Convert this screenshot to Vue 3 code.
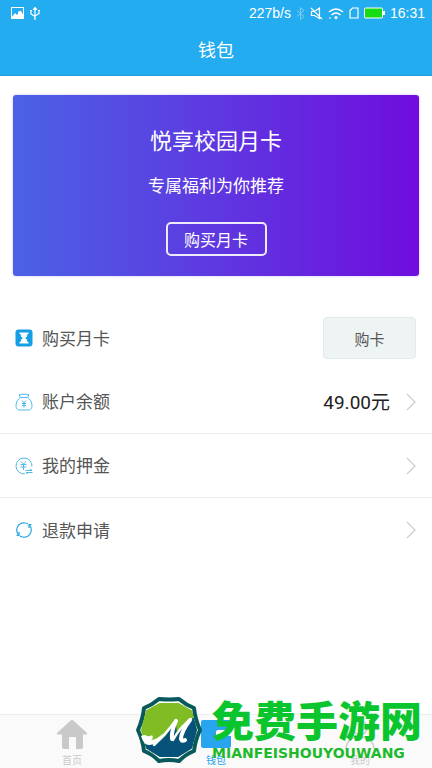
<script setup>
import { ref } from 'vue'

const activeTab = ref('wallet')

const rows = [
  { id: 'balance', label: '账户余额', value: '49.00元' },
  { id: 'deposit', label: '我的押金' },
  { id: 'refund', label: '退款申请' },
]

const tabs = [
  { id: 'home', label: '首页' },
  { id: 'wallet', label: '钱包' },
  { id: 'mine', label: '我的' },
]
</script>

<template>
  <div class="page">
    <header class="top">
      <div class="status">
        <svg width="13" height="12" viewBox="0 0 13 12">
          <path fill="#fff" fill-rule="evenodd" d="M0 0h13v12H0zM1 1v9l3-4 2 2 3-4 3 3V1z" />
          <circle cx="9" cy="6" r="2" fill="#fff" />
          <path fill="#fff" d="M1 11l3-4 2 2 3-3 3 3v2z" />
        </svg>
        <svg width="12" height="13" viewBox="0 0 12 13" fill="none" stroke="#fff" stroke-width="1.200">
          <path d="M6 1v11M2 4v3l4 2.500M10 4v2.500L6 9" />
          <path d="M4.500 2.500L6 .5l1.500 2zM1 3.500h2M9 3.500h2M5 12h2" />
        </svg>
        <span class="speed">227b/s</span>
        <svg class="bluetooth" width="9" height="13" viewBox="0 0 9 13" fill="none" stroke="#fff">
          <path d="M1 3.500l7 6-3.500 3V.7L8 3.500l-7 6" />
        </svg>
        <svg width="13" height="13" viewBox="0 0 13 13" fill="none" stroke="#fff" stroke-width="1.200">
          <path d="M1.500 4.500h3l5-3.500v10.500L4.500 8.500h-3zM1 1l11 11" />
        </svg>
        <svg width="16" height="13" viewBox="0 0 16 13" fill="none" stroke="#fff" stroke-width="1.500">
          <path d="M1 5q7-6 14 0M3.500 8q4.500-4 9 0" />
          <circle cx="8" cy="10.500" r="1.500" fill="#fff" stroke="none" />
          <path d="M1 11h2" stroke-width="1" />
        </svg>
        <svg width="10" height="12" viewBox="0 0 10 12" fill="none" stroke="#fff" stroke-width="1.200">
          <path d="M3.500 1H9v10H1V3.500z" />
        </svg>
        <svg width="21" height="12" viewBox="0 0 21 12">
          <rect x=".5" y="1" width="18" height="10" rx="1" fill="#16dc16" stroke="#fff" />
          <path d="M19 4h2v4h-2z" fill="#fff" />
        </svg>
        <span>16:31</span>
      </div>
      <h1>钱包</h1>
    </header>

    <main>
      <section class="card">
        <h2>悦享校园月卡</h2>
        <p>专属福利为你推荐</p>
        <button type="button" class="card-button">购买月卡</button>
      </section>

      <div class="row">
        <svg class="row-icon" viewBox="0 0 18 18">
          <rect x=".5" y=".5" width="17" height="17" rx="3" fill="#159ee4" />
          <path fill="#fff" d="M4.500 3.500h9v1.500h-1q0 3-2.500 4 2.500 1 2.500 4h1v1.500h-9V13h1q0-3 2.500-4-2.500-1-2.500-4h-1z" />
        </svg>
        <span class="row-label">购买月卡</span>
        <button type="button" class="buy-button">购卡</button>
      </div>

      <a v-for="row in rows" :key="row.id" href="#" class="row link-row">
        <svg class="row-icon" viewBox="0 0 18 18" fill="none" stroke="#4fb9e9" stroke-width="1">
          <template v-if="row.id === 'balance'">
            <path d="M5.500 4.500L4 1.500q2 1 3-.5 2 1 4 0 1 1.500 3 .5l-1.500 3zM5.500 4.500C3 6 1 9 1 12.500 1 16 2.500 17 5 17h8c2.500 0 4-1 4-4.500 0-3.500-2-6.500-4.500-8" />
            <path d="M7 7.500L9 10l2-2.500M7 10.500h4M7 12.500h4M9 10v4.500" />
          </template>
          <template v-else-if="row.id === 'deposit'">
            <path d="M10 16.900A8 8 0 1 1 17 9.500" />
            <path d="M6 4.500L8.500 7 11 4.500M5.500 7.500h6M5.500 10h6M8.500 7v6" />
            <path d="M10.500 13.500H17l-2-1.500M17.500 15.500H11l2 1.500" />
          </template>
          <g v-else stroke="#2ba6df" stroke-width="1.200">
            <path d="M10.500 2A7.200 7.200 0 0 0 3.800 14M7.500 16A7.200 7.200 0 0 0 14.200 4" />
            <path d="M10.500 2A7.200 7.200 0 0 1 13 3M7.500 16A7.200 7.200 0 0 1 5 15" />
            <path d="M4 11v3.300H1.500M14 7V3.700h2.500" />
          </g>
        </svg>
        <span class="row-label">{{ row.label }}</span>
        <span v-if="row.value" class="amount">{{ row.value }}</span>
        <svg width="10" height="18" viewBox="0 0 10 18" fill="none" stroke="#ccc" stroke-width="1.200">
          <path d="M1 1l8 8-8 8" />
        </svg>
      </a>
    </main>

    <footer>
      <nav class="tabs">
        <button
          v-for="tab in tabs"
          :key="tab.id"
          type="button"
          :class="['tab', { active: tab.id === activeTab }]"
          @click="activeTab = tab.id"
        >
          <svg width="32" height="32" viewBox="0 0 32 32" fill="currentColor">
            <path
              v-if="tab.id === 'home'"
              d="M16 1q1 0 2 1l13 12q1 1-1 1.500h-3V28q0 2-2 2h-5V19q0-1-1-1h-5q-1 0-1 1v11H8q-2 0-2-2V15.500H2Q0 15 1 14L14 2q1-1 2-1z"
            />
            <path
              v-else-if="tab.id === 'wallet'"
              d="M3 1h26q2 0 2 2v8H18q-2 0-2 2v2q0 2 2 2h13v10q0 2-2 2H3q-2 0-2-2V3q0-2 2-2z"
            />
            <g v-else fill="none" stroke="#d3cbd3" stroke-width="1.500">
              <circle cx="16" cy="9" r="7" />
              <path d="M2 30q1-12 14-12t14 12" />
            </g>
          </svg>
          <span>{{ tab.label }}</span>
        </button>
      </nav>

      <div class="watermark">
        <svg width="68" height="68" viewBox="0 0 68 68">
          <path
            fill="#fff"
            stroke="#07595b"
            stroke-width="4"
            stroke-linejoin="round"
            d="M24 3q10 1 20 0 7 6 15 9 1 11 6 22-5 11-6 21-8 3-15 10-10-2-20 0-7-7-15-10-1-10-6-21 5-11 6-22 8-3 15-9z"
          />
          <path
            fill="#80bc24"
            stroke="#80bc24"
            stroke-width="2"
            stroke-linejoin="round"
            d="M25 8h18l13 7 5 19-5 18-13 8H25l-13-8-5-18 5-19z"
          />
          <path
            fill="#07527a"
            stroke="#07527a"
            stroke-width="2"
            stroke-linejoin="round"
            d="M11 48q12 2 20-7l9-13 1 10 17-15 3 11-5 18-13 8H25l-13-8z"
          />
          <path fill="#fff" d="M6 40q4-2 6 0 3 1 5-1 2 3-1 5 6 0 12-7-6 12-13 12-6 1-9-9z" />
          <g fill="none" stroke="#fff" stroke-linecap="round" stroke-linejoin="round">
            <path stroke-width="2.500" d="M19 49Q31 38 41 24M38 44Q45 31 56 23" />
            <path stroke-width="4" d="M41 25Q36 36 37 43M55 24Q46 36 46 43q1 3 4 1" />
          </g>
        </svg>
        <div class="watermark-text">
          <strong>免费手游网</strong>
          <span>MIANFEISHOUYOUWANG</span>
        </div>
      </div>
    </footer>
  </div>
</template>

<style>
body {
  margin: 0;
}
</style>

<style scoped>
.page {
  display: flex;
  flex-direction: column;
  min-height: 100vh;
  background: #fff;
  color: #555;
  font-family: Roboto, 'Noto Sans CJK SC', sans-serif;
}

button {
  padding: 0;
  font-family: inherit;
  cursor: pointer;
}

.top {
  box-sizing: border-box;
  height: 76px;
  border-bottom: 1px solid #2099da;
  background: #24acf1;
  color: #fff;
}

.status {
  display: flex;
  align-items: center;
  gap: 5px;
  height: 26px;
  padding: 0 7px 0 11px;
  font-family: 'Liberation Sans', Arial, sans-serif;
  font-size: 14px;
}

.speed {
  margin-left: auto;
}

.bluetooth {
  opacity: 0.4;
}

h1 {
  margin: 0;
  font-size: 18px;
  font-weight: 400;
  line-height: 50px;
  text-align: center;
}

.card {
  display: flex;
  flex-direction: column;
  align-items: center;
  margin: 19px 13px 30px;
  padding: 30px 0 20px;
  border-radius: 3px;
  background: linear-gradient(90deg, #4b62e5, #5e38e0 50%, #700dde);
  box-shadow: 0 0 3px #c9c3ef;
  color: #fff;
}

.card h2 {
  margin: 0;
  font-size: 22px;
  font-weight: 400;
  line-height: 34px;
}

.card p {
  margin: 14px 0 23px;
  font-size: 17px;
  line-height: 26px;
}

.card-button {
  width: 101px;
  height: 34px;
  border: 2px solid #eee9ff;
  border-radius: 5px;
  background: transparent;
  color: #fff;
  font-size: 16px;
}

.row {
  display: flex;
  align-items: center;
  box-sizing: border-box;
  height: 64px;
  padding: 0 16px 0 15px;
  color: #555;
  text-decoration: none;
}

.link-row {
  border-bottom: 1px solid #eee;
}

.link-row:last-child {
  border-bottom: 0;
}

.row-icon {
  width: 18px;
  height: 18px;
  margin-right: 9px;
}

.row-label {
  flex: 1;
  padding-bottom: 2px;
  font-size: 17px;
}

.buy-button {
  width: 93px;
  height: 42px;
  border: 1px solid #e3eaea;
  border-radius: 4px;
  background: #eef4f4;
  color: #555;
  font-size: 15px;
}

.amount {
  margin-right: 16px;
  padding-bottom: 2px;
  color: #222;
  font-size: 19px;
}

footer {
  position: relative;
  margin-top: auto;
}

.tabs {
  display: grid;
  grid-template-columns: repeat(3, 1fr);
  border-top: 1px solid #eee;
  background: #fafafa;
}

.tab {
  display: flex;
  flex-direction: column;
  align-items: center;
  gap: 3px;
  padding: 4px 0 0;
  border: 0;
  background: transparent;
  color: #c9c9c9;
  font-size: 10px;
  line-height: 14px;
}

.tab.active {
  color: #29a4ef;
}

.watermark {
  position: absolute;
  right: 10px;
  bottom: 4px;
  display: flex;
  gap: 9px;
  pointer-events: none;
}

.watermark-text {
  display: flex;
  flex-direction: column;
  color: #0bc52e;
}

.watermark-text strong {
  font-family: 'Noto Sans CJK SC', sans-serif;
  font-size: 42px;
  font-weight: 900;
  line-height: 46px;
}

.watermark-text span {
  color: #1fb92c;
  font-family: 'DejaVu Sans', sans-serif;
  font-size: 14px;
  font-weight: 700;
  line-height: 22px;
}
</style>
